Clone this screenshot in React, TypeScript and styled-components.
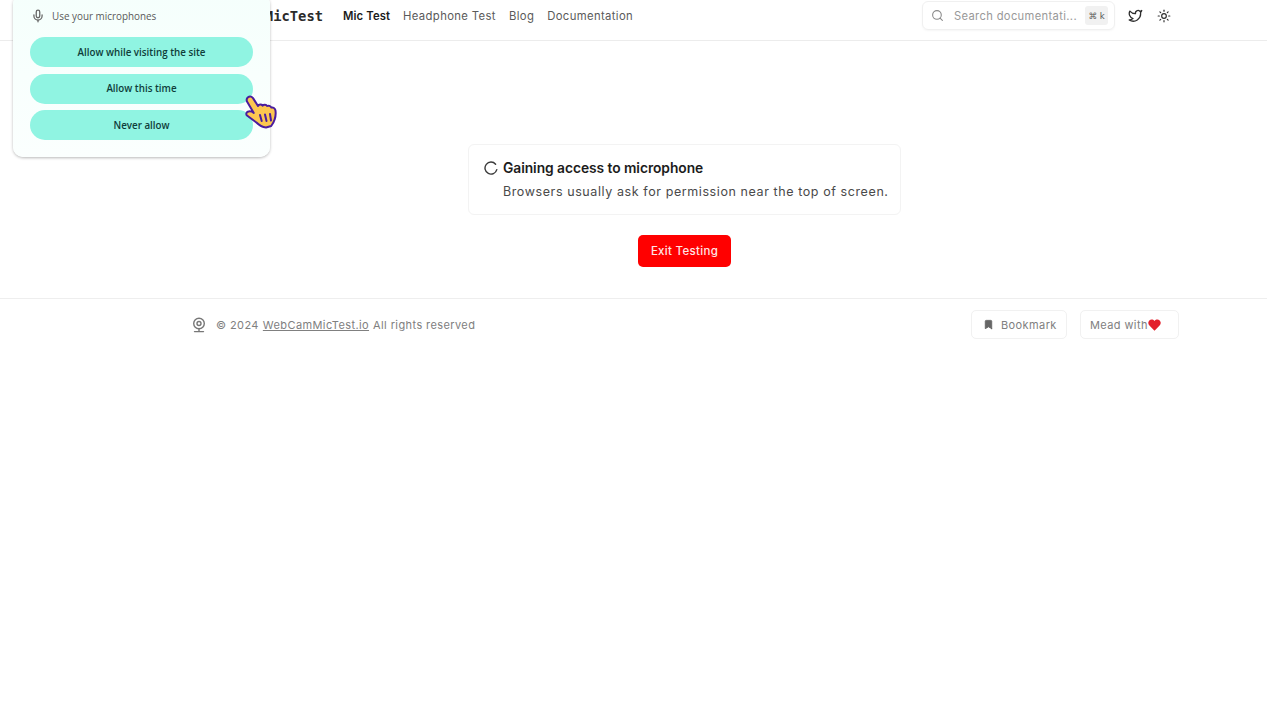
import React from "react";
import styled, { createGlobalStyle } from "styled-components";
import { Search, Twitter, Sun, Mic, Bookmark } from "lucide-react";

const Global = createGlobalStyle`
  html, body { margin: 0; padding: 0; background: #fff; }
  body { font-family: Inter, "Liberation Sans", sans-serif; color: #1a1a1a; }
  * { box-sizing: border-box; }
`;
const Page = styled.div`
  position: relative;
  width: 1267px;
  height: 713px;
  overflow: hidden;
  background: #fff;
`;
const Header = styled.header`
  height: 41px;
  border-bottom: 1px solid #ececec;
  display: flex;
  align-items: center;
  padding: 0 96px 9px 0;
`;
const Logo = styled.div`
  width: 323px;
  text-align: right;
  font: 700 13.8px "DejaVu Sans Mono", monospace;
  color: #2a2a2a;
`;
const Nav = styled.nav`
  display: flex;
  gap: 13px;
  margin-left: 20px;
  flex: 1;
`;
const NavLink = styled.a<{ $active?: boolean }>`
  font-size: 11.3px;
  letter-spacing: ${(p) => (p.$active ? "0.1px" : "0.36px")};
  font-weight: ${(p) => (p.$active ? 600 : 400)};
  color: ${(p) => (p.$active ? "#1c1c1c" : "#5a5a5a")};
`;
const SearchBox = styled.div`
  width: 193px;
  height: 29px;
  border: 1px solid #f0f0f0;
  border-radius: 6px;
  box-shadow: 0 1px 2px rgba(0, 0, 0, 0.04);
  display: flex;
  align-items: center;
  padding: 0 6px 0 8px;
  color: #8a8a8a;
`;
const SearchText = styled.span`
  flex: 1;
  margin-left: 10px;
  font-size: 11.2px;
  letter-spacing: 0.34px;
  color: #999;
  white-space: nowrap;
`;
const Kbd = styled.span`
  width: 23px;
  height: 19px;
  border-radius: 3px;
  background: #f1f1f1;
  color: #555;
  font-size: 8.5px;
  display: flex;
  align-items: center;
  justify-content: center;
  font-family: "DejaVu Sans", sans-serif;
`;
const IconRow = styled.div`
  display: flex;
  align-items: center;
  gap: 14px;
  margin-left: 13px;
  color: #2e2e2e;
`;
const Main = styled.main`
  height: 258px;
  display: flex;
  flex-direction: column;
  align-items: center;
  padding: 103px 0 0 102px;
  border-bottom: 1px solid #eeeeee;
`;
const Card = styled.section`
  width: 433px;
  height: 71px;
  border: 1px solid #f3f3f3;
  border-radius: 6px;
  display: grid;
  grid-template-columns: 14px 1fr;
  column-gap: 5px;
  align-content: center;
  row-gap: 6px;
  padding: 1px 0 0 15px;
`;
const Spinner = styled.svg`
  align-self: center;
  color: #3a3a3a;
`;
const Title = styled.h2`
  margin: 0;
  font-size: 13.8px;
  font-weight: 600;
  letter-spacing: -0.05px;
  color: #1c1c1c;
  line-height: 18px;
`;
const Desc = styled.p`
  grid-column: 2;
  margin: 0;
  font-size: 12.5px;
  letter-spacing: 0.59px;
  color: #4a4a4a;
  line-height: 18px;
  white-space: nowrap;
`;
const ExitButton = styled.button`
  margin-top: 20px;
  width: 93px;
  height: 32px;
  border: none;
  border-radius: 5px;
  background: #ff0000;
  color: #ffe5e5;
  font: 500 11.5px Inter, sans-serif;
  letter-spacing: 0.3px;
`;
const Footer = styled.footer`
  display: flex;
  align-items: center;
  justify-content: space-between;
  padding: 11px 88px 0 192px;
  color: #808080;
  font-size: 11px;
  letter-spacing: 0.4px;
`;
const FooterLeft = styled.div`
  display: flex;
  align-items: center;
  gap: 4px;
`;
const CamIcon = styled.svg`
  margin-right: 6px;
  color: #777;
`;
const FooterLink = styled.a`
  text-decoration: underline;
  color: #808080;
`;
const FooterRight = styled.div`
  display: flex;
  gap: 13px;
`;
const FooterButton = styled.div<{ $w: number; $pad: number }>`
  width: ${(p) => p.$w}px;
  height: 29px;
  border: 1px solid #f1f1f1;
  border-radius: 5px;
  display: flex;
  align-items: center;
  padding-left: ${(p) => p.$pad}px;
  color: #808080;
`;
const BookmarkGlyph = styled(Bookmark)`
  margin: 0 7px 0 2px;
  color: #666;
  fill: #666;
`;
const Heart = styled.svg`
  margin-left: 0;
`;
const Popup = styled.aside`
  position: absolute;
  left: 13px;
  top: -6px;
  width: 257px;
  height: 163px;
  border-radius: 10px;
  background: linear-gradient(180deg, #f5fffc 0%, #fbfffe 100%);
  box-shadow: 0 1px 3px rgba(0, 0, 0, 0.28);
  padding: 6px 17px 0;
  font-family: "Open Sans", sans-serif;
`;
const PopupHead = styled.div`
  height: 32px;
  display: flex;
  align-items: center;
  padding-left: 1px;
  gap: 7px;
  font-size: 9.9px;
  color: #5a5a5a;
  margin-bottom: 5px;
`;
const PopupButtons = styled.div`
  display: flex;
  flex-direction: column;
  gap: 6.5px;
`;
const PopupButton = styled.div`
  height: 30px;
  width: 223px;
  border-radius: 15px;
  background: #90f4e2;
  color: #0f3d3a;
  font-size: 9.8px;
  font-weight: 600;
  display: flex;
  align-items: center;
  justify-content: center;
`;
const Hand = styled.svg`
  position: absolute;
  left: 245px;
  top: 95px;
`;

export default function App() {
  return (
    <Page>
      <Global />
      <Header>
        <Logo>MicTest</Logo>
        <Nav>
          <NavLink $active>Mic Test</NavLink>
          <NavLink>Headphone Test</NavLink>
          <NavLink>Blog</NavLink>
          <NavLink>Documentation</NavLink>
        </Nav>
        <SearchBox>
          <Search size={13} />
          <SearchText>Search documentati...</SearchText>
          <Kbd>⌘ k</Kbd>
        </SearchBox>
        <IconRow>
          <Twitter size={15} strokeWidth={2.1} />
          <Sun size={14} strokeWidth={2} />
        </IconRow>
      </Header>
      <Main>
        <Card>
          <Spinner width="14" height="14" viewBox="0 0 14 14" fill="none" stroke="currentColor" strokeWidth="1.4" strokeLinecap="round">
            <path d="M11.6 3.200A6 6 0 1 0 12.800 8.600" />
          </Spinner>
          <Title>Gaining access to microphone</Title>
          <Desc>Browsers usually ask for permission near the top of screen.</Desc>
        </Card>
        <ExitButton>Exit Testing</ExitButton>
      </Main>
      <Footer>
        <FooterLeft>
          <CamIcon width="14" height="16" viewBox="0 0 14 16" fill="none" stroke="currentColor" strokeWidth="1.4">
            <circle cx="7" cy="6.5" r="5.3" />
            <circle cx="7" cy="6.5" r="2" />
            <path d="M7 12v2M2.500 14.600h9" strokeLinecap="round" />
          </CamIcon>
          <span>© 2024</span>
          <FooterLink>WebCamMicTest.io</FooterLink>
          <span>All rights reserved</span>
        </FooterLeft>
        <FooterRight>
          <FooterButton $w={96} $pad={9}>
            <BookmarkGlyph size={11} />
            Bookmark
          </FooterButton>
          <FooterButton $w={99} $pad={9}>
            Mead with
            <Heart width="13" height="12" viewBox="0 0 24 22">
              <path fill="#e3202c" d="M12 21.500 2.600 12.100C-.2 9.200-.2 5 2.400 2.500 5-.1 9.300 0 12 3.400 14.700 0 19-.1 21.600 2.500c2.600 2.500 2.600 6.700-.2 9.600z" />
            </Heart>
          </FooterButton>
        </FooterRight>
      </Footer>
      <Popup>
        <PopupHead>
          <Mic size={14} color="#666" strokeWidth={2.2} />
          <span>Use your microphones</span>
        </PopupHead>
        <PopupButtons>
          <PopupButton>Allow while visiting the site</PopupButton>
          <PopupButton>Allow this time</PopupButton>
          <PopupButton>Never allow</PopupButton>
        </PopupButtons>
      </Popup>
      <Hand width="34" height="35" viewBox="0 0 34 35">
        <path
          d="M3 2.200c2-1.400 4-.6 5.200 1.200L13 11c1-1.800 3.400-2 4.600-.4 1.200-1.400 3.600-1.200 4.600.4 1.400-.8 3.400-.2 4.200 1.600 1.800-.4 3.600.6 4 2.600.6 3.400.2 6.400-.8 9.400-.6 2.200-1.800 4.400-3.400 6.400L21 32.500c-3.600-.4-7-2.400-9.600-5L2 20.500c-1.200-1.200-.8-3 .8-3.800 2-.8 4.200-.2 6 1.200L2 6.500C1.400 5 1.800 3.200 3 2.200z"
          fill="#fcc750"
          stroke="#4a1d9e"
          strokeWidth="2"
          strokeLinejoin="round"
        />
        <path d="M15 20l1.700 6M20 19.500l1.500 6.500M25 19l1 6.500" stroke="#4a1d9e" strokeWidth="2" strokeLinecap="round" fill="none" />
      </Hand>
    </Page>
  );
}
